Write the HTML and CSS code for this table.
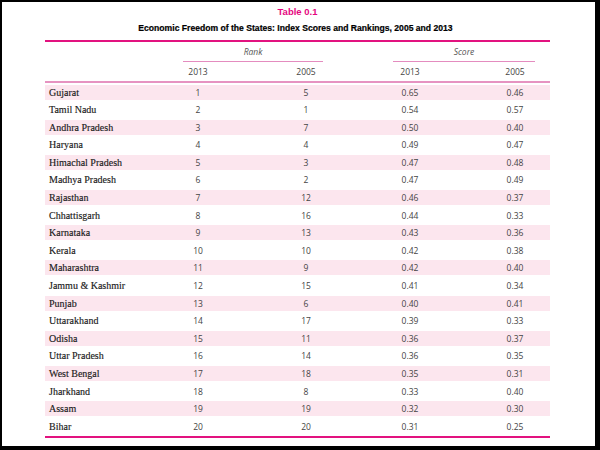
FILE: index.html
```html
<!DOCTYPE html>
<html>
<head>
<meta charset="utf-8">
<link rel="stylesheet" href="styles.css">
</head>
<body>
<div class="page">
  <div class="caption">Table 0.1</div>
  <div class="title">Economic Freedom of the States: Index Scores and Rankings, 2005 and 2013</div>
  <div class="table">
    <div class="rule-top"></div>
    <div class="group-head">
      <div></div>
      <div class="grp grp-rank">Rank</div>
      <div class="grp grp-score">Score</div>
    </div>
    <div class="year-head">
      <div></div>
      <div class="num">2013</div>
      <div class="num">2005</div>
      <div class="num">2013</div>
      <div class="num num-last">2005</div>
    </div>
    <div class="rows">
      <div class="row shade"><div class="name">Gujarat</div><div class="num">1</div><div class="num">5</div><div class="num">0.65</div><div class="num num-last">0.46</div></div>
      <div class="row"><div class="name">Tamil Nadu</div><div class="num">2</div><div class="num">1</div><div class="num">0.54</div><div class="num num-last">0.57</div></div>
      <div class="row shade"><div class="name">Andhra Pradesh</div><div class="num">3</div><div class="num">7</div><div class="num">0.50</div><div class="num num-last">0.40</div></div>
      <div class="row"><div class="name">Haryana</div><div class="num">4</div><div class="num">4</div><div class="num">0.49</div><div class="num num-last">0.47</div></div>
      <div class="row shade"><div class="name">Himachal Pradesh</div><div class="num">5</div><div class="num">3</div><div class="num">0.47</div><div class="num num-last">0.48</div></div>
      <div class="row"><div class="name">Madhya Pradesh</div><div class="num">6</div><div class="num">2</div><div class="num">0.47</div><div class="num num-last">0.49</div></div>
      <div class="row shade"><div class="name">Rajasthan</div><div class="num">7</div><div class="num">12</div><div class="num">0.46</div><div class="num num-last">0.37</div></div>
      <div class="row"><div class="name">Chhattisgarh</div><div class="num">8</div><div class="num">16</div><div class="num">0.44</div><div class="num num-last">0.33</div></div>
      <div class="row shade"><div class="name">Karnataka</div><div class="num">9</div><div class="num">13</div><div class="num">0.43</div><div class="num num-last">0.36</div></div>
      <div class="row"><div class="name">Kerala</div><div class="num">10</div><div class="num">10</div><div class="num">0.42</div><div class="num num-last">0.38</div></div>
      <div class="row shade"><div class="name">Maharashtra</div><div class="num">11</div><div class="num">9</div><div class="num">0.42</div><div class="num num-last">0.40</div></div>
      <div class="row"><div class="name">Jammu &amp; Kashmir</div><div class="num">12</div><div class="num">15</div><div class="num">0.41</div><div class="num num-last">0.34</div></div>
      <div class="row shade"><div class="name">Punjab</div><div class="num">13</div><div class="num">6</div><div class="num">0.40</div><div class="num num-last">0.41</div></div>
      <div class="row"><div class="name">Uttarakhand</div><div class="num">14</div><div class="num">17</div><div class="num">0.39</div><div class="num num-last">0.33</div></div>
      <div class="row shade"><div class="name">Odisha</div><div class="num">15</div><div class="num">11</div><div class="num">0.36</div><div class="num num-last">0.37</div></div>
      <div class="row"><div class="name">Uttar Pradesh</div><div class="num">16</div><div class="num">14</div><div class="num">0.36</div><div class="num num-last">0.35</div></div>
      <div class="row shade"><div class="name">West Bengal</div><div class="num">17</div><div class="num">18</div><div class="num">0.35</div><div class="num num-last">0.31</div></div>
      <div class="row"><div class="name">Jharkhand</div><div class="num">18</div><div class="num">8</div><div class="num">0.33</div><div class="num num-last">0.40</div></div>
      <div class="row shade"><div class="name">Assam</div><div class="num">19</div><div class="num">19</div><div class="num">0.32</div><div class="num num-last">0.30</div></div>
      <div class="row"><div class="name">Bihar</div><div class="num">20</div><div class="num">20</div><div class="num">0.31</div><div class="num num-last">0.25</div></div>
    </div>
    <div class="rule-bottom"></div>
  </div>
</div>
</body>
</html>
```
FILE: styles.css
```css
html, body {
  margin: 0;
  padding: 0;
  background: #000;
}
body {
  width: 600px;
  height: 450px;
  overflow: hidden;
}
.page {
  margin: 2px 5px 0 2px;
  width: 593px;
  height: 444px;
  background: #fff;
  padding-top: 4px;
  box-sizing: border-box;
  font-family: "Open Sans", "Liberation Sans", sans-serif;
  color: #444;
}
.caption {
  text-align: center;
  font-family: "Liberation Sans", Arial, sans-serif;
  font-weight: bold;
  font-size: 9.5px;
  line-height: 12px;
  color: #e5067f;
  margin-left: -2px;
}
.title {
  margin-top: 4px;
  text-align: center;
  font-family: "Liberation Sans", Arial, sans-serif;
  font-weight: bold;
  font-size: 8.6px;
  line-height: 12px;
  color: #000;
  margin-left: -6px;
  -webkit-text-stroke: 0.2px #000;
}
.table {
  margin-left: 43px;
  width: 505px;
}
.rule-top {
  margin-top: 6px;
  height: 2px;
  background: #e2127f;
}
.group-head,
.year-head,
.row {
  display: grid;
  grid-template-columns: 99px 108px 108px 100px 90px;
}
.group-head {
  margin-top: 4px;
}
.grp {
  font-style: italic;
  font-size: 8.5px;
  line-height: 12px;
  text-align: center;
  padding-bottom: 3px;
  border-bottom: 1.5px solid #e48cbf;
  color: #555;
}
.grp-rank {
  grid-column: 2 / 4;
  margin: 0 37px 0 39px;
}
.grp-score {
  grid-column: 4 / 6;
  margin: 0 15px 0 33px;
}
.year-head {
  margin-top: 3.5px;
  padding-bottom: 3px;
  border-bottom: 2px solid #e693c1;
  font-size: 8.5px;
  line-height: 12px;
}
.num {
  text-align: center;
}
.num-last {
  padding-left: 20px;
}
.rows {
  margin-top: 2px;
  display: flex;
  flex-direction: column;
  gap: 2.6px;
}
.row {
  height: 15px;
  line-height: 15px;
  font-size: 8.5px;
}
.row.shade {
  background: #fce6ee;
}
.name {
  padding-left: 4px;
  font-family: "Liberation Serif", "Times New Roman", serif;
  font-size: 10px;
  color: #1a1a1a;
  white-space: nowrap;
  -webkit-text-stroke: 0.15px #1a1a1a;
}
.rule-bottom {
  margin-top: 2.4px;
  height: 2px;
  background: #e2127f;
}
```
